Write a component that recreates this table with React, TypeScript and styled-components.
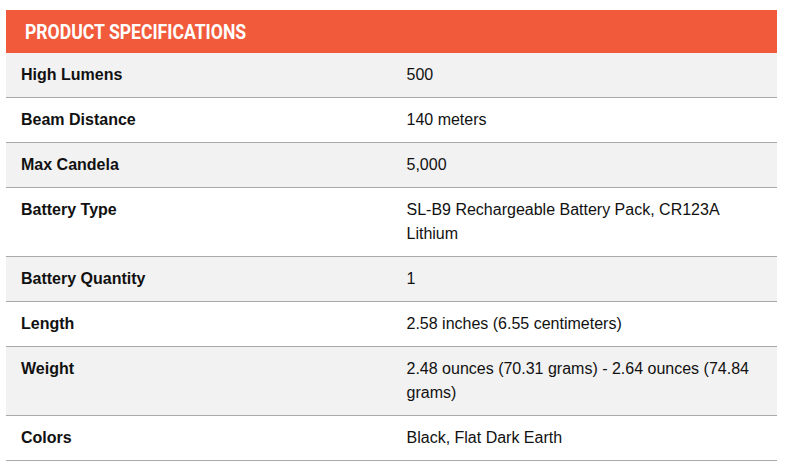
import styled, { createGlobalStyle } from 'styled-components'

const GlobalStyle = createGlobalStyle`
	html, body {
		margin: 0;
		padding: 0;
		background: #ffffff;
	}
	body {
		font-family: 'Liberation Sans', Arial, sans-serif;
	}
`

const Wrapper = styled.div`
	padding: 10px 0 0 6px;
`

const Specs = styled.div`
	width: 771px;
`

const Title = styled.h2`
	margin: 0;
	height: 43px;
	display: flex;
	align-items: center;
	padding: 0 19px;
	background: #f15b3b;
	color: #ffffff;
	font-family: 'Roboto', sans-serif;
	font-size: 20px;
	font-weight: 700;
	text-transform: uppercase;
	span {
		display: inline-block;
		transform: scaleX(0.88);
		transform-origin: left center;
	}
`

const Row = styled.div<{ $shade: boolean }>`
	display: grid;
	grid-template-columns: 1fr 1fr;
	background: ${(props) => (props.$shade ? '#f2f2f2' : '#ffffff')};
	border-bottom: 1px solid #a9a9a9;
`

const Cell = styled.div<{ $label?: boolean }>`
	padding: 10px 15px;
	font-size: 16px;
	line-height: 24px;
	color: #111111;
	font-weight: ${(props) => (props.$label ? 700 : 400)};
`

const specs: [string, string][] = [
	['High Lumens', '500'],
	['Beam Distance', '140 meters'],
	['Max Candela', '5,000'],
	['Battery Type', 'SL-B9 Rechargeable Battery Pack, CR123A Lithium'],
	['Battery Quantity', '1'],
	['Length', '2.58 inches (6.55 centimeters)'],
	['Weight', '2.48 ounces (70.31 grams) - 2.64 ounces (74.84 grams)'],
	['Colors', 'Black, Flat Dark Earth'],
]

export default function App() {
	return (
		<>
			<GlobalStyle />
			<Wrapper>
				<Specs>
					<Title>
						<span>Product Specifications</span>
					</Title>
					{specs.map(([label, value], i) => (
						<Row key={label} $shade={i % 2 === 0}>
							<Cell $label>{label}</Cell>
							<Cell>{value}</Cell>
						</Row>
					))}
				</Specs>
			</Wrapper>
		</>
	)
}
